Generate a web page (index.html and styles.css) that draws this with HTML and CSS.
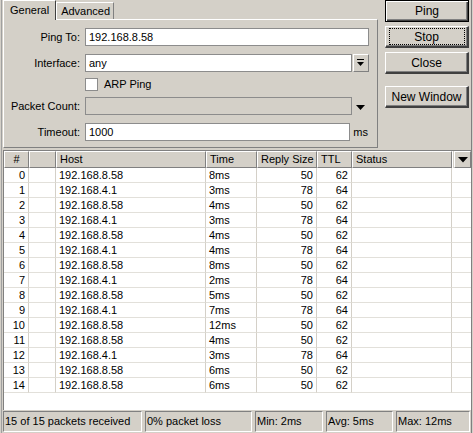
FILE: index.html
```html
<!DOCTYPE html>
<html lang="en">
<head>
  <meta charset="utf-8">
  <title>Ping</title>
  <link rel="stylesheet" href="styles.css">
</head>
<body>
<div class="window">
  <div class="top">
    <div class="tabs">
      <div class="tab-strip">
        <span class="tab active">General</span>
        <span class="tab">Advanced</span>
      </div>
      <div class="panel">
        <div class="row">
          <span class="label">Ping To:</span>
          <span class="field">192.168.8.58</span>
        </div>
        <div class="row">
          <span class="label">Interface:</span>
          <span class="field">any</span>
          <span class="drop-btn">
            <svg width="8" height="8" viewBox="0 0 8 8"><rect x="0" y="0" width="7" height="1" fill="#000"/><polygon points="0,3 7,3 3.5,7" fill="#000"/></svg>
          </span>
        </div>
        <div class="row row-check">
          <span class="label"></span>
          <span class="check"></span>
          <span>ARP Ping</span>
        </div>
        <div class="row">
          <span class="label">Packet Count:</span>
          <span class="field disabled"></span>
          <span class="drop-arrow">
            <svg width="9" height="5" viewBox="0 0 9 5"><polygon points="0,0 9,0 4.5,5" fill="#000"/></svg>
          </span>
        </div>
        <div class="row">
          <span class="label">Timeout:</span>
          <span class="field">1000</span>
          <span class="unit">ms</span>
        </div>
      </div>
    </div>
    <div class="buttons">
      <div class="btn default">Ping</div>
      <div class="btn focus"><span>Stop</span></div>
      <div class="btn">Close</div>
      <div class="btn spaced">New Window</div>
    </div>
  </div>

  <div class="list">
    <div class="grid head">
      <div class="hc center">#</div>
      <div class="hc"></div>
      <div class="hc">Host</div>
      <div class="hc">Time</div>
      <div class="hc">Reply Size</div>
      <div class="hc">TTL</div>
      <div class="hc last">Status</div>
      <div class="hc menu">
        <svg width="10" height="6" viewBox="0 0 10 6"><polygon points="0,0 10,0 5,5.5" fill="#000"/></svg>
      </div>
    </div>
    <div class="body">
      <div class="grid"><div class="num">0</div><div></div><div>192.168.8.58</div><div>8ms</div><div class="num">50</div><div class="num">62</div><div></div><div></div></div>
      <div class="grid"><div class="num">1</div><div></div><div>192.168.4.1</div><div>3ms</div><div class="num">78</div><div class="num">64</div><div></div><div></div></div>
      <div class="grid"><div class="num">2</div><div></div><div>192.168.8.58</div><div>4ms</div><div class="num">50</div><div class="num">62</div><div></div><div></div></div>
      <div class="grid"><div class="num">3</div><div></div><div>192.168.4.1</div><div>3ms</div><div class="num">78</div><div class="num">64</div><div></div><div></div></div>
      <div class="grid"><div class="num">4</div><div></div><div>192.168.8.58</div><div>4ms</div><div class="num">50</div><div class="num">62</div><div></div><div></div></div>
      <div class="grid"><div class="num">5</div><div></div><div>192.168.4.1</div><div>4ms</div><div class="num">78</div><div class="num">64</div><div></div><div></div></div>
      <div class="grid"><div class="num">6</div><div></div><div>192.168.8.58</div><div>8ms</div><div class="num">50</div><div class="num">62</div><div></div><div></div></div>
      <div class="grid"><div class="num">7</div><div></div><div>192.168.4.1</div><div>2ms</div><div class="num">78</div><div class="num">64</div><div></div><div></div></div>
      <div class="grid"><div class="num">8</div><div></div><div>192.168.8.58</div><div>5ms</div><div class="num">50</div><div class="num">62</div><div></div><div></div></div>
      <div class="grid"><div class="num">9</div><div></div><div>192.168.4.1</div><div>7ms</div><div class="num">78</div><div class="num">64</div><div></div><div></div></div>
      <div class="grid"><div class="num">10</div><div></div><div>192.168.8.58</div><div>12ms</div><div class="num">50</div><div class="num">62</div><div></div><div></div></div>
      <div class="grid"><div class="num">11</div><div></div><div>192.168.8.58</div><div>4ms</div><div class="num">50</div><div class="num">62</div><div></div><div></div></div>
      <div class="grid"><div class="num">12</div><div></div><div>192.168.4.1</div><div>3ms</div><div class="num">78</div><div class="num">64</div><div></div><div></div></div>
      <div class="grid"><div class="num">13</div><div></div><div>192.168.8.58</div><div>6ms</div><div class="num">50</div><div class="num">62</div><div></div><div></div></div>
      <div class="grid"><div class="num">14</div><div></div><div>192.168.8.58</div><div>6ms</div><div class="num">50</div><div class="num">62</div><div></div><div></div></div>
    </div>
  </div>

  <div class="status">
    <div class="seg s1">15 of 15 packets received</div>
    <div class="seg s2">0% packet loss</div>
    <div class="seg s3">Min: 2ms</div>
    <div class="seg s4">Avg: 5ms</div>
    <div class="seg s5">Max: 12ms</div>
  </div>
</div>
</body>
</html>
```

FILE: styles.css
```css
body {
  margin: 0;
  background-color: #d4d0c8;
  font-family: "Liberation Sans", Arial, sans-serif;
  font-size: 11px;
  color: #000;
}

.window {
  width: 469px;
  height: 433px;
  margin-left: 1px;
  border-left: 1px solid #a0a0a0;
  border-right: 1px solid #808080;
  display: flex;
  flex-direction: column;
}

/* top part: tabs + buttons */
.top {
  display: flex;
  height: 150px;
}

.tabs {
  width: 375px;
  margin-left: 1px;
}

.tab-strip {
  display: flex;
  height: 19px;
  align-items: flex-end;
}

.tab {
  height: 17px;
  line-height: 16px;
  padding: 0 3px 0 4px;
  border-top: 1px solid #fff;
  border-left: 1px solid #fff;
  border-right: 1px solid #808080;
  box-sizing: border-box;
  background: #d4d0c8;
}

.tab.active {
  height: 20px;
  line-height: 18px;
  padding: 0 6px 0 6px;
  margin-bottom: -1px;
  position: relative;
  z-index: 1;
  border-right: 1px solid #404040;
}

.panel {
  height: 129px;
  box-sizing: border-box;
  border-top: 1px solid #fff;
  border-left: 1px solid #fff;
  border-right: 1px solid #808080;
  border-bottom: 1px solid #808080;
  padding: 8px 8px 0 0;
}

.row {
  display: flex;
  align-items: center;
  height: 18px;
  margin-bottom: 8px;
}

.row:nth-child(2) {
  margin-bottom: 5px;
}

.row-check {
  height: 14px;
  margin-bottom: 6px;
}

.label {
  width: 76px;
  flex: none;
  text-align: right;
  margin-right: 5px;
}

.field {
  flex: 1;
  height: 18px;
  line-height: 16px;
  box-sizing: border-box;
  border: 1px solid #8c8c8c;
  background: #fff;
  padding-left: 3px;
  white-space: nowrap;
}

.field.disabled {
  background: #d4d0c8;
}

.drop-btn {
  width: 16px;
  height: 18px;
  box-sizing: border-box;
  margin-left: 1px;
  border-top: 1px solid #fff;
  border-left: 1px solid #fff;
  border-right: 1px solid #808080;
  border-bottom: 1px solid #808080;
  display: flex;
  align-items: center;
  justify-content: center;
}

.drop-arrow {
  width: 17px;
  display: flex;
  justify-content: center;
  padding-top: 3px;
}

.unit {
  width: 18px;
  text-align: right;
  padding-right: 1px;
}

.check {
  width: 13px;
  height: 13px;
  box-sizing: border-box;
  border: 1px solid #8c8c8c;
  background: #fff;
  margin-right: 6px;
}

.buttons {
  margin-left: 7px;
  width: 84px;
  display: flex;
  flex-direction: column;
  gap: 4px;
}

.btn {
  height: 22px;
  box-sizing: border-box;
  border-top: 1px solid #fff;
  border-left: 1px solid #fff;
  border-right: 2px solid #404040;
  border-bottom: 2px solid #404040;
  box-shadow: inset -1px -1px 0 #808080;
  display: flex;
  align-items: center;
  justify-content: center;
  font-size: 12px;
}

.btn.default {
  border: 1px solid #000;
  box-shadow: inset 1px 1px 0 #fff, inset -1px -1px 0 #404040, inset -2px -2px 0 #808080;
}

.btn.focus span {
  display: flex;
  align-items: center;
  justify-content: center;
  width: 74px;
  height: 15px;
  border: 1px dotted #000;
}

.btn.spaced {
  margin-top: 8px;
}

/* packet list */
.list {
  height: 259px;
  margin-left: 1px;
  background: #fff;
  border-left: 1px solid #808080;
  border-top: 1px solid #808080;
}

.grid {
  display: grid;
  grid-template-columns: 25px 27px 150px 51px 60px 35px 100px 1fr;
}

.head {
  height: 17px;
  background: #d4d0c8;
}

.hc {
  box-sizing: border-box;
  border-top: 1px solid #fff;
  border-left: 1px solid #fff;
  border-right: 1px solid #808080;
  border-bottom: 1px solid #808080;
  padding-left: 3px;
  line-height: 15px;
  white-space: nowrap;
  overflow: hidden;
}

.hc.center {
  text-align: center;
  padding-left: 0;
}

.hc.last {
  border-right: 1px solid #808080;
  box-shadow: 1px 0 0 #fff;
}

.hc.menu {
  display: flex;
  align-items: center;
  justify-content: center;
  padding-left: 1px;
  margin-left: 2px;
}

.body .grid > div {
  height: 15px;
  box-sizing: border-box;
  border-right: 1px solid #d4d0c8;
  border-bottom: 1px solid #e2e0da;
  padding: 0 3px;
  line-height: 14px;
  white-space: nowrap;
}

.body .grid > div:last-child {
  border-right: none;
}

.body .num {
  text-align: right;
}

/* status bar */
.status {
  display: flex;
  gap: 3px;
  height: 21px;
  margin-top: 1px;
  margin-left: 1px;
}

.seg {
  box-sizing: border-box;
  border-top: 1px solid #808080;
  border-left: 1px solid #808080;
  border-right: 1px solid #fff;
  border-bottom: 1px solid #fff;
  padding-left: 1px;
  line-height: 19px;
  white-space: nowrap;
}

.s1 { width: 139px; }
.s2 { width: 107px; }
.s3 { width: 68px; }
.s4 { width: 67px; }
.s5 { width: 74px; }
```
